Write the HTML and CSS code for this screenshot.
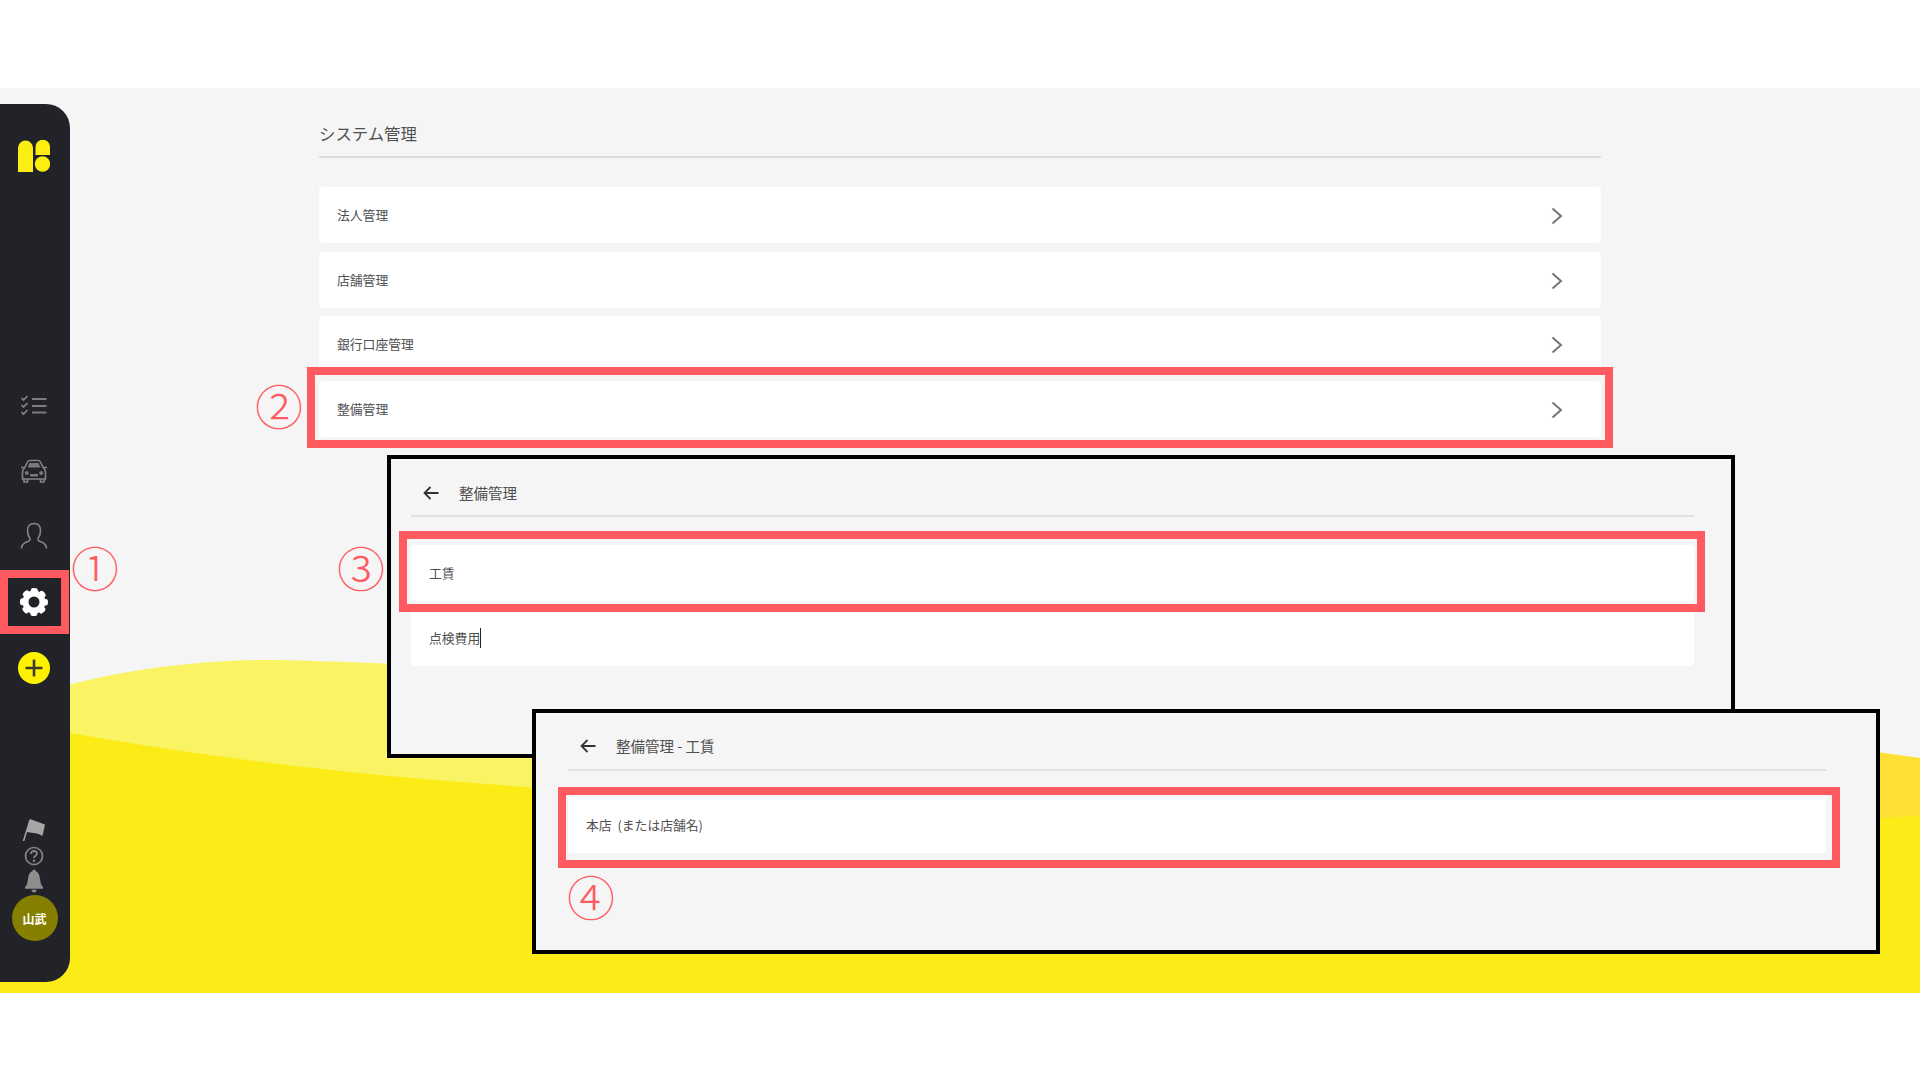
FILE: index.html
```html
<!DOCTYPE html>
<html lang="ja">
<head>
<meta charset="utf-8">
<title>システム管理</title>
<link rel="stylesheet" href="styles.css">
</head>
<body>
<div class="app">
  <svg class="waves" viewBox="0 0 1920 905" aria-hidden="true">
    <defs>
      <linearGradient id="lightWave" x1="0" x2="1" y1="0" y2="0">
        <stop offset="0.3" stop-color="#faf364"/>
        <stop offset="0.97" stop-color="#fde033"/>
      </linearGradient>
    </defs>
    <path fill="url(#lightWave)" d="M0 620 C90 582 200 572 268 572 C340 572 700 590 1100 600 C1500 610 1750 645 1920 670 V905 H0 Z"/>
    <path fill="#fbeb17" d="M0 632 C250 680 420 692 600 704 C1000 740 1600 760 1920 727 V905 H0 Z"/>
  </svg>

  <aside class="sidebar">
    <svg class="logo" viewBox="0 0 32 32" aria-hidden="true">
      <path d="M0 32 V8 A7.5 7.5 0 0 1 15 8 V32 Z"/>
      <path d="M17.5 15 V7 A7 7 0 0 1 32 7 V15 Z"/>
      <circle cx="24.5" cy="24" r="7.7"/>
    </svg>
    <nav class="nav">
      <div class="nav-item">
        <svg class="icon" viewBox="0 0 28 24" aria-hidden="true">
          <path class="line" d="M12 6 H26.5 M12 13 H26.5 M12 19.5 H26.5"/>
          <path class="thin" d="M1.5 5 L3.5 7 L7.5 3 M1.5 12 L3.5 14 L7.5 10 M1.5 19 L3.5 21 L7.5 17"/>
        </svg>
      </div>
      <div class="nav-item">
        <svg class="icon" viewBox="0 0 28 24" aria-hidden="true">
          <path class="thin" d="M4.5 9 L7.5 3 Q8.2 1.5 10 1.5 H18 Q19.8 1.5 20.5 3 L23.5 9 Q25.5 10.8 25.5 13.5 V20 H2.500 V13.5 Q2.500 10.800 4.500 9 Z"/>
          <path class="thin" d="M5 8.500 H1 M23 8.500 H27 M4 20 V23 H7.500 V20 M20.500 20 V23 H24 V20"/>
          <path class="solid" d="M7.500 8.500 L9.500 4 H18.500 L20.500 8.500 Z"/>
          <circle class="solid" cx="6.800" cy="14" r="2"/>
          <circle class="solid" cx="21.200" cy="14" r="2"/>
          <rect class="solid" x="10" y="15" width="8" height="2.500"/>
        </svg>
      </div>
      <div class="nav-item">
        <svg class="icon" viewBox="0 0 28 28" aria-hidden="true">
          <path class="thin" d="M1.500 26.500 C1.500 22 4.500 20.500 8 19.500 C10 19 10.500 17.500 9.500 15.500 C8 13.500 7.500 11 7.500 8.500 C7.500 4 10 1.500 14 1.500 C18 1.500 20.500 4 20.500 8.500 C20.500 11 20 13.500 18.500 15.500 C17.500 17.500 18 19 20 19.500 C23.500 20.500 26.500 22 26.500 26.500"/>
        </svg>
      </div>
      <div class="nav-item">
        <span class="hl hl-nav"></span>
        <svg class="icon-gear" viewBox="0 0 30 30" aria-hidden="true">
          <circle class="gear-body" cx="15" cy="15" r="8.500"/>
          <circle class="gear-teeth" cx="15" cy="15" r="11.800"/>
        </svg>
      </div>
      <div class="nav-item">
        <svg class="icon-plus" viewBox="0 0 32 32" aria-hidden="true">
          <circle class="plus-disc" cx="16" cy="16" r="16"/>
          <path class="plus-bar" d="M16 7.500 V24.500 M7.500 16 H24.500"/>
        </svg>
      </div>
    </nav>
    <div class="side-bottom">
      <svg class="icon-flag" viewBox="0 0 24 24" aria-hidden="true">
        <path class="flag-pole" d="M1.500 23 L8 2"/>
        <path class="flag-cloth" d="M8 1 L23 6.500 L20.500 18 C17 15.500 13 15 8 14.500 L4.500 14 Z"/>
      </svg>
      <svg class="icon-help" viewBox="0 0 20 20" aria-hidden="true">
        <circle class="help-ring" cx="10" cy="10" r="8.500"/>
        <path class="help-mark" d="M7 8 C7 6 8.300 5 10 5 C11.800 5 13 6 13 7.600 C13 9.800 10 9.800 10 12"/>
        <circle class="help-dot" cx="10" cy="14.800" r="1.200"/>
      </svg>
      <svg class="icon-bell" viewBox="0 0 20 24" aria-hidden="true">
        <path d="M10 0.500 C11 0.500 11.500 1.300 11.500 2.100 C14.500 3.200 15.500 6 16 10 C16.400 13.500 17 16 19 18 V19.800 H1 V18 C3 16 3.600 13.500 4 10 C4.500 6 5.500 3.200 8.500 2.100 C8.500 1.300 9 0.500 10 0.500 Z"/>
        <path d="M7.500 20.800 H12.500 C12.500 22.500 11.500 23.500 10 23.500 C8.500 23.500 7.500 22.500 7.500 20.800 Z"/>
      </svg>
      <div class="avatar">山武</div>
    </div>
  </aside>

  <main class="main">
    <h1 class="page-title">システム管理</h1>
    <div class="list">
      <div class="row"><span>法人管理</span>
        <svg class="chev" viewBox="0 0 12 18" aria-hidden="true"><path d="M1.500 1.500 L10 9 L1.500 16.500"/></svg></div>
      <div class="row"><span>店舗管理</span>
        <svg class="chev" viewBox="0 0 12 18" aria-hidden="true"><path d="M1.500 1.500 L10 9 L1.500 16.500"/></svg></div>
      <div class="row"><span>銀行口座管理</span>
        <svg class="chev" viewBox="0 0 12 18" aria-hidden="true"><path d="M1.500 1.500 L10 9 L1.500 16.500"/></svg></div>
      <div class="row"><span>整備管理</span>
        <svg class="chev" viewBox="0 0 12 18" aria-hidden="true"><path d="M1.500 1.500 L10 9 L1.500 16.500"/></svg>
        <span class="hl hl-main"></span></div>
    </div>
  </main>

  <section class="panel panel-a">
    <header class="panel-head">
      <svg class="back" viewBox="0 0 16 14" aria-hidden="true"><path d="M15.500 7 H2 M7.500 1 L1.500 7 L7.500 13"/></svg>
      <h2 class="panel-title">整備管理</h2>
    </header>
    <div class="panel-list">
      <div class="row"><span>工賃</span><span class="hl hl-a"></span></div>
      <div class="row"><span>点検費用</span><span class="caret"></span></div>
    </div>
  </section>

  <section class="panel panel-b">
    <header class="panel-head">
      <svg class="back" viewBox="0 0 16 14" aria-hidden="true"><path d="M15.500 7 H2 M7.500 1 L1.500 7 L7.500 13"/></svg>
      <h2 class="panel-title">整備管理 - 工賃</h2>
    </header>
    <div class="panel-list">
      <div class="row"><span class="store-name">本店 (または店舗名)</span><span class="hl hl-b"></span></div>
    </div>
  </section>

  <span class="num n1">①</span>
  <span class="num n2">②</span>
  <span class="num n3">③</span>
  <span class="num n4">④</span>
</div>
</body>
</html>
```

FILE: styles.css
```css
* { box-sizing: border-box; }
html, body { margin: 0; padding: 0; background: #fff; }
body {
  height: 1080px;
  overflow: hidden;
  font-family: "Noto Sans CJK JP", "Noto Sans", sans-serif;
  color: #505050;
  padding-top: 88px;
}
.app {
  position: relative;
  display: flex;
  align-items: flex-start;
  height: 905px;
  background: #f5f5f5;
  overflow: hidden;
}
.waves {
  position: absolute;
  inset: 0;
  width: 1920px;
  height: 905px;
}

/* sidebar */
.sidebar {
  position: relative;
  flex: none;
  display: flex;
  flex-direction: column;
  align-items: center;
  width: 70px;
  height: 878px;
  margin-top: 16px;
  padding: 36px 2px 41px 0;
  background: #212329;
  border-radius: 0 24px 24px 0;
}
.logo { width: 32px; height: 32px; fill: #fdee11; flex: none; }
.nav { width: 100%; margin-top: 200px; }
.nav-item {
  position: relative;
  display: flex;
  align-items: center;
  justify-content: center;
  height: 65.75px;
}
.icon { width: 28px; height: auto; fill: none; }
.line { stroke: #7c7c7c; stroke-width: 2; }
.thin { stroke: #858585; stroke-width: 1.6; fill: none; }
.solid { fill: #7a7a7a; }
.icon-gear { width: 30px; height: 30px; }
.gear-body { fill: none; stroke: #fff; stroke-width: 6; }
.gear-teeth {
  fill: none;
  stroke: #fff;
  stroke-width: 4.4;
  stroke-linecap: round;
  stroke-dasharray: 2.8 6.47;
  stroke-dashoffset: 1.4;
}
.icon-plus { width: 32px; height: 32px; }
.plus-disc { fill: #fff200; }
.plus-bar { stroke: #3d3d2c; stroke-width: 2.6; fill: none; }
.side-bottom {
  margin-top: auto;
  display: flex;
  flex-direction: column;
  align-items: center;
}
.icon-flag { width: 24px; height: 24px; margin-left: -1px; }
.flag-pole { stroke: #a6a6a6; stroke-width: 1.5; fill: none; }
.flag-cloth { fill: #a6a6a6; }
.icon-help { width: 20px; height: 20px; margin-top: 4px; }
.help-ring { fill: none; stroke: #858585; stroke-width: 1.7; }
.help-mark { fill: none; stroke: #858585; stroke-width: 1.8; }
.help-dot { fill: #858585; }
.icon-bell { width: 20px; height: 24px; margin-top: 3px; fill: #8e8e8e; }
.avatar {
  display: flex;
  align-items: center;
  justify-content: center;
  width: 46px;
  height: 46px;
  margin-top: 2px;
  margin-right: -1px;
  border-radius: 50%;
  background: #858000;
  color: #fff;
  font-size: 12px;
  font-weight: 700;
}

/* main list */
.main {
  position: relative;
  flex: none;
  width: 1282px;
  margin-left: 249px;
  padding-top: 33px;
}
.page-title {
  margin: 0 0 29px;
  padding-bottom: 11px;
  border-bottom: 2px solid #dcdcdc;
  font-size: 16.4px;
  line-height: 24px;
  font-weight: 400;
}
.list { display: flex; flex-direction: column; gap: 8.67px; }
.row {
  position: relative;
  display: flex;
  align-items: center;
  justify-content: space-between;
  height: 56px;
  padding: 0 38px 1px 18px;
  background: #fff;
  border-radius: 4px;
  font-size: 12.8px;
}
.chev { width: 12px; height: 18px; margin-top: 3px; fill: none; stroke: #757575; stroke-width: 2; }
.store-name { word-spacing: 3px; }

/* annotation panels */
.panel {
  position: absolute;
  width: 1348px;
  background: #f5f5f5;
  border: 4px solid #000;
}
.panel-a { left: 387px; top: 367px; height: 303px; padding: 0 37px 0 20px; }
.panel-b { left: 532px; top: 621px; height: 245px; padding: 0 50px 0 32px; }
.panel-head {
  display: flex;
  align-items: center;
  height: 58px;
  border-bottom: 2px solid #e0e0e0;
  padding: 10px 0 0 12px;
}
.panel-a .panel-head { margin-bottom: 28px; padding-top: 12px; }
.panel-b .panel-head { margin-bottom: 26px; }
.back {
  flex: none;
  width: 16px;
  height: 14px;
  margin-right: 20px;
  fill: none;
  stroke: #333;
  stroke-width: 1.8;
}
.panel-title { margin: 0; font-size: 14.5px; line-height: 20px; font-weight: 400; }
.panel-list { display: flex; flex-direction: column; gap: 9px; }
.panel-list .row { justify-content: flex-start; }
.caret {
  display: block;
  width: 1px;
  height: 20px;
  background: #222;
}

/* red highlight frames */
.hl {
  position: absolute;
  border: 8px solid #ff5a5f;
  z-index: 2;
}
.hl-nav { top: 1px; bottom: 1px; left: 0; right: -1px; }
.hl-main { top: -14px; bottom: -11px; left: -12px; right: -12px; }
.hl-a { top: -14px; bottom: -11px; left: -12px; right: -11px; }
.hl-b { top: -10px; bottom: -15px; left: -10px; right: -14px; }

/* circled step numbers */
.num {
  position: absolute;
  width: 50px;
  height: 50px;
  line-height: 50px;
  text-align: center;
  font-size: 48px;
  font-weight: 300;
  color: #ff5a5f;
  z-index: 3;
}
.n1 { left: 70px; top: 453px; }
.n2 { left: 254px; top: 291px; }
.n3 { left: 336px; top: 453px; }
.n4 { left: 566px; top: 782px; }
```
